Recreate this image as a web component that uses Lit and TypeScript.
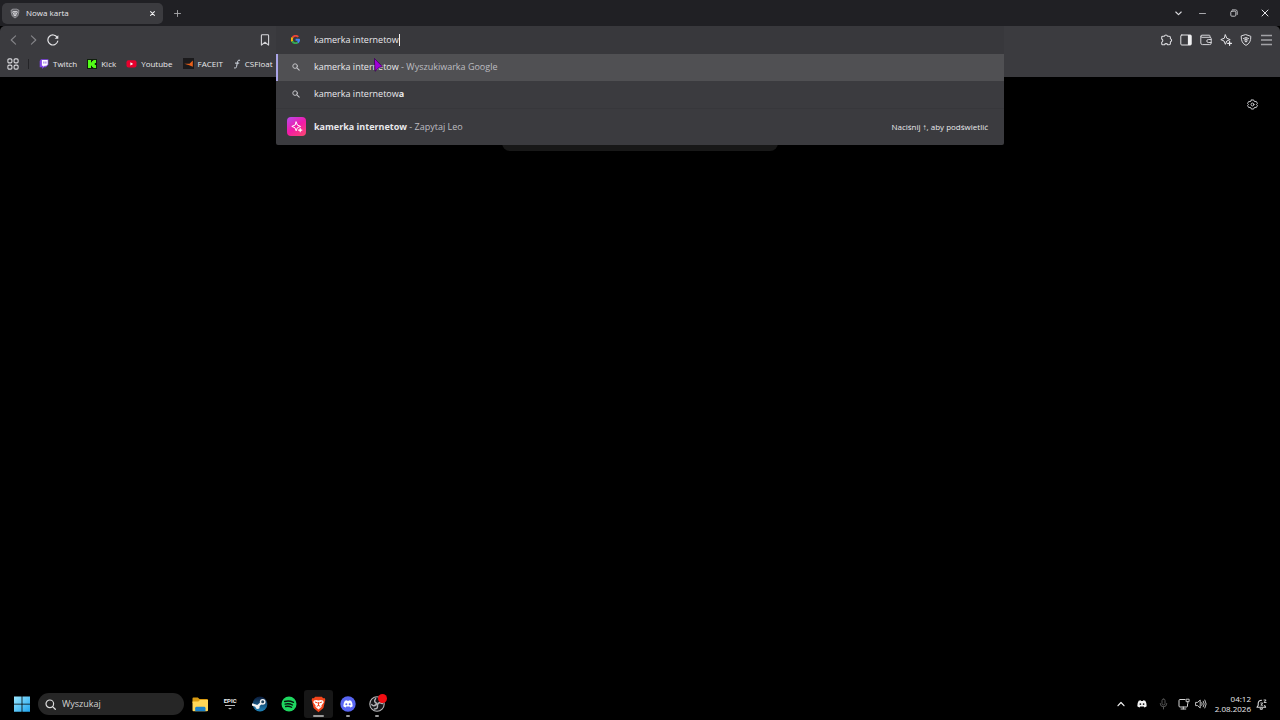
import { LitElement, html, css, svg } from "lit";
import { customElement } from "lit/decorators.js";

const icon = (w: number, h: number, body: unknown, vb = `0 0 ${w} ${h}`) =>
  html`<svg width=${w} height=${h} viewBox=${vb} fill="none" stroke-linecap="round" stroke-linejoin="round" aria-hidden="true">${body}</svg>`;

const shieldPath = "M6 .7 10.8 2.3C11 6.8 9.4 9.8 6 11.4 2.6 9.8 1 6.8 1.2 2.3Z";

const icons = {
  tabShield: icon(10, 11, svg`<path d="M3.4.8h5.2l1 1 1.2.2-.4 1.2.3.8-1.4 5L6 11.4 2.7 9l-1.4-5 .3-.8L1.2 2l1.2-.2Z" fill="#606065" stroke="#aaaab0" stroke-width=".9"/><path d="M3.3 3.2 5 3l1 .4L7 3l1.7.2.7 1.2-1.6 2.4L8 8 6 9.6 4 8l.2-1.2-1.6-2.4Z" fill="#d5d5d9"/><path d="M4 4.7l1.2.4M8 4.7l-1.2.4M6 5.3v2" stroke="#55555a" stroke-width=".7"/>`, "0 0 12 12"),
  close: icon(5, 5, svg`<path d="M.6.6 4.4 4.4M4.4.6.6 4.4" stroke="#f0f0f2" stroke-width="1.1"/>`),
  plus: icon(7, 7, svg`<path d="M3.5.5v6M.5 3.5h6" stroke="#a9a9ad" stroke-width=".9"/>`),
  chevron: icon(7, 5, svg`<path d="M.8 1 3.5 3.7 6.2 1" stroke="#dcdce0" stroke-width="1.1"/>`),
  minimize: icon(7, 5, svg`<path d="M.5 2.5h6" stroke="#b8b8bc" stroke-width=".9"/>`),
  restore: icon(8, 8, svg`<rect x=".8" y="2.2" width="5" height="5" rx="1" stroke="#d0d0d4" stroke-width=".9"/><path d="M2.4.9h3.2a1.6 1.6 0 0 1 1.6 1.6v3" stroke="#d0d0d4" stroke-width=".9"/>`),
  exit: icon(8, 8, svg`<path d="M1 1l6 6M7 1 1 7" stroke="#e4e4e8" stroke-width="1"/>`),
  back: icon(7, 10, svg`<path d="M5.6.8 1.2 5l4.4 4.2" stroke="#858589" stroke-width="1.1"/>`),
  forward: icon(7, 10, svg`<path d="M1.4.8 5.8 5 1.4 9.2" stroke="#858589" stroke-width="1.1"/>`),
  reload: icon(12, 12, svg`<path d="M10.2 3.4A5 5 0 1 0 10.8 7" stroke="#e3e3e6" stroke-width="1.2"/><path d="M11.3 1.2v3.6H7.7Z" fill="#e3e3e6"/>`),
  bookmark: icon(10, 12, svg`<path d="M1.4 1.6q0-.9.9-.9h5.4q.9 0 .9.9v9.5L5 8.3l-3.6 2.8Z" stroke="#d6d6da" stroke-width="1.1"/>`),
  grid: icon(12, 12, svg`<g stroke="#d8d8dc" stroke-width="1.1"><rect x=".9" y=".9" width="4" height="4" rx="1.2"/><rect x="7.1" y=".9" width="4" height="4" rx="1.2"/><rect x=".9" y="7.1" width="4" height="4" rx="1.2"/><rect x="7.1" y="7.1" width="4" height="4" rx="1.2"/></g>`),
  twitch: icon(10, 10, svg`<path d="M2 .3h7.4v5.5L6.8 8.3H5L3.2 10V8.3H.7V2Z" fill="#8046e6"/><path d="M2.9 1h5.8v4.4L7.3 6.7H5.6L4.3 8V6.7H2.9Z" fill="#fff"/><path d="M4.9 2.5v2.1M6.9 2.5v2.1" stroke="#8046e6" stroke-width=".9" stroke-linecap="butt"/>`),
  kick: icon(10, 10, svg`<path d="M0 0h10v10H0Z" fill="#10200c"/><path d="M1 1h3v2.2h1V2h1.2V1H9v3H7.8v2H9v3H6.2V8H5V6.8H4V9H1Z" fill="#53fc18"/>`),
  youtube: icon(11, 10, svg`<rect x=".5" y="1.2" width="10" height="7.4" rx="2" fill="#e8002d"/><path d="M4.4 3.3 7.2 4.9 4.4 6.5Z" fill="#fff"/>`),
  faceit: icon(11, 11, svg`<path d="M0 0h11v11H0Z" fill="#1b1a1c"/><path d="M9.8 2.5v6.2Q7 7.2 1.2 5.8h5.3Z" fill="#e9601a"/>`),
  csfloat: icon(8, 10, svg`<path d="M6.7 1.2C5.2.7 4.8 1.6 4.4 3.5L3.6 7.4C3.2 9 2.5 9.4 1.5 9M2.4 4.1h3.4" stroke="#d5dce6" stroke-width="1"/>`),
  google: icon(9, 9, svg`<g stroke-width="1.9" stroke-linecap="butt"><path d="M7.3 1.9A3.7 3.7 0 0 0 1.4 2.8" stroke="#ea4335"/><path d="M1.4 2.6a3.7 3.7 0 0 0 0 3.8" stroke="#fbbc05"/><path d="M1.3 6.3a3.7 3.7 0 0 0 5.7 1" stroke="#34a853"/><path d="M6.8 7.4A3.5 3.5 0 0 0 8.1 4.8H4.6" stroke="#4285f4"/></g>`),
  search: icon(8, 8, svg`<circle cx="3.1" cy="3.1" r="2.3" stroke="#c4c4c8" stroke-width="1"/><path d="M4.9 4.9 7.2 7.2" stroke="#c4c4c8" stroke-width="1.1"/>`),
  leo: icon(12, 12, svg`<path d="M5.2 1 6.4 4.1 9.6 5.4 6.4 6.7 5.2 9.8 3.9 6.7.8 5.4 3.9 4.1Z" stroke="#fff" stroke-width="1"/><path d="M9.2 7.4v3.4M7.5 9.1h3.4" stroke="#fff" stroke-width="1.1"/>`),
  puzzle: icon(13, 12, svg`<path d="M2.9 2.2h1.500a1.600 1.600 0 0 1 3.100 0h1.700q1.200 0 1.200 1.200v1.400a1.600 1.600 0 0 1 0 3.100v1.700q0 1.200-1.200 1.200H7.700a1.700 1.700 0 0 0-3.200 0H2.900q-1.200 0-1.200-1.200V8.200a1.700 1.700 0 0 0 0-3.200V3.400q0-1.200 1.200-1.200Z" stroke="#dadade" stroke-width="1.100"/>`),
  sidebar: icon(12, 12, svg`<rect x=".8" y="1" width="10.4" height="10" rx="1" stroke="#e3e3e6" stroke-width="1"/><path d="M7.9 1h2.7q.7 0 .7.7v8.6q0 .7-.7.7H7.9Z" fill="#f0f0f2"/>`),
  wallet: icon(12, 12, svg`<path d="M10 3.2V2q0-.8-.8-.8H2Q.8 1.2.8 2.3V9q0 1.6 1.6 1.6h7.3q1.5 0 1.5-1.500V4.700q0-1.400-1.400-1.400H2Q.8 3.300.8 2.300M11.100 5.500H8.300a1.500 1.500 0 0 0 0 3h2.800" stroke="#d5d5d9" stroke-width="1"/>`),
  sparkle: icon(12, 12, svg`<path d="M5.4.9 6.8 4.3 10.2 5.6 6.8 7 5.4 10.3 4 7 .8 5.6 4 4.3Z" stroke="#e0e0e4" stroke-width="1"/><path d="M9.6 7.5v3.8M7.7 9.4h3.8" stroke="#e8e8ec" stroke-width="1.2"/>`),
  shield: icon(12, 12, svg`<path d=${shieldPath} stroke="#d8d8dc" stroke-width="1"/><path d="M3.4 4.4Q6 2.5 8.6 4.4M4.2 6Q6 4.7 7.8 6M5.2 7.6h1.6M6 4v3.8" stroke="#d8d8dc" stroke-width="1"/>`),
  menu: icon(11, 12, svg`<path d="M0 1.500h11M0 6h11M0 10.500h11" stroke="#a2a2a6" stroke-width="1.400" stroke-linecap="butt"/>`),
  gear: icon(11, 11, svg`<path d="M4.300.8h2.400l.5 1.300.8.500 1.400-.3 1.200 2.100-.9 1.100.9 1.100-1.200 2.100L8 8.400l-.8.500-.5 1.300H4.300l-.5-1.300L3 8.400l-1.400.3L.4 6.600l.9-1.100-.9-1.100 1.200-2.100 1.400.3.800-.5Z" stroke="#cdcdd1" stroke-width="1"/><circle cx="5.500" cy="5.500" r="1.500" stroke="#cdcdd1" stroke-width="1"/>`, "-.2 0 11.400 11"),
  start: icon(16, 16, svg`<defs><linearGradient id="w" x1="0" y1="0" x2="1" y2="1"><stop stop-color="#9be7ff"/><stop offset="1" stop-color="#1fa5ee"/></linearGradient></defs><path d="M0 .5h7.6v7.2H0ZM8.4.5H16v7.2H8.4ZM0 8.5h7.6v7.2H0ZM8.4 8.5H16v7.2H8.4Z" fill="url(#w)"/>`),
  lens: icon(11, 11, svg`<circle cx="4.8" cy="4.8" r="3.8" stroke="#dedede" stroke-width="1.2"/><path d="M7.6 7.6 10.3 10.3" stroke="#dedede" stroke-width="1.3"/>`),
  folder: icon(17, 15, svg`<path d="M.5 1.5q0-1 1-1h4.3L7.5 2H15q1 0 1 1v3H.5Z" fill="#d99b12"/><path d="M.5 4.4h5.8L8 3h8v10.2q0 1-1 1H1.500q-1 0-1-1Z" fill="#ffd757"/><path d="M3.200 14.200v-3q0-1.400 1.400-1.400h7.500q1.400 0 1.400 1.400v3Z" fill="#1b82c9"/>`),
  steam: icon(16, 16, svg`<defs><linearGradient id="s" x1="0" y1="0" x2="0" y2="1"><stop stop-color="#0b1b3a"/><stop offset="1" stop-color="#1f83b8"/></linearGradient></defs><circle cx="8" cy="8" r="7.4" fill="url(#s)"/><path d="M.7 8.6 5.4 10.4 10.5 6" stroke="#f2f2f2" stroke-width="2.3"/><circle cx="10.7" cy="5.8" r="2.9" fill="#f2f2f2"/><circle cx="10.7" cy="5.8" r="1.5" fill="#23455f"/><circle cx="5.6" cy="11" r="2.1" fill="#f2f2f2"/>`),
  spotify: icon(16, 16, svg`<circle cx="8" cy="8" r="7.5" fill="#1ed760"/><path d="M3.6 5.5q4.7-1.3 8.9.9M4.1 8.1q4-1 7.4.9M4.6 10.5q3.3-.8 6 .8" stroke="#07160c" stroke-width="1.3"/>`),
  brave: icon(15, 17, svg`<path d="M4.2.7h6.6l1.4 1.5 1.4-.2.8 2-.4 1-1.6 7L7.5 16.2 2.6 12 1 5 .6 4l.8-2 1.4.2Z" fill="#f4461c"/><path d="M3 4.4 5.2 4l2.3.6L9.8 4l2.2.4.8 1.8-2.4 3.2.2 1.4-3.1 2.8-3.1-2.8.2-1.4-2.4-3.2Z" fill="#fff"/><path d="M4.3 6.1 6.4 6.9M10.7 6.1 8.6 6.9M7.5 6.5v3M6.1 10.2l1.4-.8 1.4.8" stroke="#f4461c" stroke-width="1"/>`),
  discord: icon(16, 16, svg`<circle cx="8" cy="8" r="7.7" fill="#5865f2"/><path d="M4.9 4.8Q6 4.2 6.7 4.2L7 4.8h2l.3-.6q.8 0 1.9.6 1.7 2.6 1.5 5.5-1.2 1-2.4 1.2l-.6-.9H6.3l-.6.9Q4.5 11.3 3.3 10.3 3.2 7.2 4.9 4.8Z" fill="#fff"/><circle cx="6.3" cy="8.3" r="1" fill="#5865f2"/><circle cx="9.7" cy="8.3" r="1" fill="#5865f2"/>`),
  obs: icon(16, 16, svg`<circle cx="8" cy="8" r="7.2" fill="#17171a" stroke="#b9b9bb" stroke-width="1.1"/><g stroke="#b0b0b3" stroke-width="1.5"><path d="M6.6 2.6Q4.2 5.6 7.8 7.5"/><path d="M13.3 7.5Q9.6 5.3 8.5 8.8"/><path d="M5.5 13Q9.7 12.8 8.2 8.6"/><path d="M2.8 8.6Q4.5 11 7.4 8.4"/></g>`),
  up: icon(8, 6, svg`<path d="M1 4.7 4 1.5 7 4.7" stroke="#f0f0f0" stroke-width="1.2"/>`),
  discordTray: icon(10, 8, svg`<path d="M1.7.8Q3 .2 3.7.3L4 1h2l.3-.7Q7 .2 8.3.8 10 3.4 9.7 6.3 8.6 7.3 7.4 7.4L6.8 6.5H3.2L2.6 7.4Q1.4 7.3.3 6.3 0 3.4 1.7.8Z" fill="#f4f4f4"/><circle cx="3.4" cy="4.1" r=".9" fill="#111"/><circle cx="6.6" cy="4.1" r=".9" fill="#111"/>`),
  mic: icon(9, 12, svg`<rect x="3" y="1" width="3" height="6" rx="1.5" stroke="#5e5e5e" stroke-width=".9"/><path d="M1.2 5.5q0 3.3 3.3 3.3t3.3-3.3M4.5 8.8V11" stroke="#5e5e5e" stroke-width=".9"/>`),
  network: icon(12, 12, svg`<path d="M7 1.500H2q-1 0-1 1v5.500q0 1 1 1h6.500q1 0 1-1V6.300M3 11h4.800M5.300 9v1.900" stroke="#d6d6d6" stroke-width="1"/><path d="M8.500 1.200h2.600v2.500H8.500ZM9.800 3.700v2" stroke="#d6d6d6" stroke-width=".9"/>`),
  speaker: icon(12, 12, svg`<path d="M1 4.400h1.600L5.200 2v8L2.600 7.600H1Z" stroke="#d6d6d6" stroke-width=".9"/><path d="M6.800 4.600q1 1.400 0 2.800M8.300 3.200q2 2.800 0 5.600M9.900 2q2.700 4 0 8" stroke="#d6d6d6" stroke-width=".9"/>`),
  bell: icon(11, 11, svg`<path d="M5.600 1.200Q2.300 1.200 2.200 4.500V6.300L1 8.300h8.600L8.700 6.500M4.200 9.700q1.100.9 2.200 0" stroke="#dadada" stroke-width="1.100"/><path d="M4.800 4h1.900L4.800 6.200h1.900M8 1h2.100L8 3.500h2.100" stroke="#dadada" stroke-width=".9"/>`),
  pointer: icon(9, 14, svg`<path d="M.6.6 8.400 8.600 5 9.400 1.300 13Z" fill="#a000d8" stroke="#3c0058" stroke-width=".8"/>`),
};

@customElement("app-root")
export class AppRoot extends LitElement {
  static styles = css`
    :host {
      display: flex;
      flex-direction: column;
      height: 100vh;
      min-height: 320px;
      background: #000;
      color: #e9e9ec;
      font: 9px/12px "Open Sans", "Noto Sans", sans-serif;
      overflow: hidden;
    }
    * { box-sizing: border-box; }
    svg { display: block; flex: none; }
    button, input { font: inherit; color: inherit; background: none; border: 0; padding: 0; margin: 0; outline: 0; }
    button { display: flex; align-items: center; justify-content: center; }
    a { color: inherit; text-decoration: none; }

    .tabs { display: flex; align-items: center; height: 26px; padding-left: 2px; background: #202024; }
    .tab { display: flex; align-items: center; width: 161px; height: 21px; padding: 0 8px; gap: 6px; border-radius: 5px; background: #3b3b3f; }
    .tab-title { flex: 1; font-size: 8px; }
    .new-tab { width: 28px; height: 20px; }
    .window { display: flex; margin-left: auto; }
    .window button { width: 31px; height: 26px; }
    .window .list { width: 18px; }

    .chrome { background: #3b3b3f; border-radius: 5px 5px 0 0; }
    .nav { display: grid; grid-template-columns: 1fr minmax(0, 728px) 1fr; height: 28px; }
    .nav-side { display: flex; align-items: center; padding: 0 3px; }
    .nav-side button { width: 20px; height: 20px; }
    .nav-side.right { justify-content: flex-end; padding-right: 4px; }
    .save { margin-left: auto; }
    .nav-side.left { padding-right: 1px; }

    .omnibox { position: relative; background: #38383c; z-index: 2; }
    .query { display: flex; align-items: center; height: 28px; padding: 0 15px 1px; font-size: 9px; }
    .lead { display: flex; width: 23px; flex: none; }
    .query input { field-sizing: content; padding: 0; height: 12px; }
    .caret { width: 1px; height: 12px; background: #eee; }
    .results { position: absolute; left: 0; right: 0; top: 100%; margin: 0; padding: 0; list-style: none; background: #3b3b3f; border-radius: 0 0 2px 2px; }
    .result { display: flex; align-items: center; height: 27px; padding: 0 16px 1px; }
    .result .lead { width: 22px; }
    .result.active { background: #505053; border-left: 2px solid #aaa5e8; padding-left: 14px; }
    .result.ask { height: 37px; padding-left: 11px; border-top: 1px solid #37373b; }
    .result.ask .lead { width: 27px; }
    .leo { display: flex; align-items: center; justify-content: center; width: 19px; height: 19px; border-radius: 4px; background: linear-gradient(145deg, #b74bee, #f21aa8 50%, #fb4a6d); }
    .muted { color: #bdbdc1; white-space: pre; }
    .hint { margin-left: auto; font-size: 8px; }

    .bookmarks { display: flex; align-items: center; height: 23px; padding: 0 7px 4px; font-size: 8px; font-weight: 500; }
    .bookmarks a { display: flex; align-items: center; gap: 4px; margin-right: 10px; }
    .rule { width: 1px; height: 10px; margin: 0 10px 0 9px; background: #242427; }

    .page { position: relative; flex: 1; display: grid; grid-template-columns: 1fr 276px 1fr; align-items: start; }
    .search-card { grid-column: 2; height: 40px; margin-top: 34px; border-radius: 8px; background: #181818; }
    .settings { justify-self: end; width: 20px; height: 20px; margin: 17px 18px 0 0; }

    .taskbar { display: flex; align-items: center; height: 32px; padding: 0 13px 0 14px; }
    .start { width: 16px; }
    .find { display: flex; align-items: center; gap: 6px; width: 146px; height: 22px; margin: 0 2px 0 8px; padding-left: 7px; border-radius: 11px; background: #262626; }
    .find input { width: 100px; }
    .find input::placeholder { color: #d2d2d2; opacity: 1; }
    .apps { display: flex; width: 206px; }
    .app { position: relative; flex: 1; height: 28px; }
    .app.open::after { content: ""; position: absolute; bottom: 1px; width: 4px; height: 2px; border-radius: 1px; background: #9a9a9a; }
    .app.current { background: #171717; border-radius: 3px; }
    .app.current::after { width: 11px; }
    .epic { display: flex; flex-direction: column; align-items: center; font: 700 6px/6px "Roboto", "Liberation Sans", sans-serif; color: #eee; }
    .badge { position: absolute; right: 5px; top: 4px; width: 9px; height: 9px; border-radius: 50%; background: #f30d12; }
    .tray { display: flex; align-items: center; margin-left: auto; }
    .tray button { width: 21px; height: 24px; }
    .tray .tight { width: 12px; }
    .clock { margin: 0 5px 0 8px; text-align: right; font-size: 8px; line-height: 10px; }
    .tray .bell { width: 11px; }

    .pointer { position: absolute; left: 98px; top: 32px; z-index: 3; pointer-events: none; }
  `;

  private bookmarks = [
    ["Twitch", icons.twitch],
    ["Kick", icons.kick],
    ["Youtube", icons.youtube],
    ["FACEIT", icons.faceit],
    ["CSFloat", icons.csfloat],
  ] as const;

  render() {
    return html`
      <header class="tabs">
        <div class="tab">${icons.tabShield}<span class="tab-title">Nowa karta</span><button aria-label="Zamknij kartę">${icons.close}</button></div>
        <button class="new-tab" aria-label="Otwórz nową kartę">${icons.plus}</button>
        <div class="window">
          <button class="list" aria-label="Przeszukaj karty">${icons.chevron}</button>
          <button aria-label="Minimalizuj">${icons.minimize}</button>
          <button aria-label="Przywróć">${icons.restore}</button>
          <button aria-label="Zamknij">${icons.exit}</button>
        </div>
      </header>
      <div class="chrome">
        <div class="nav">
          <div class="nav-side left">
            <button aria-label="Wstecz">${icons.back}</button>
            <button aria-label="Dalej">${icons.forward}</button>
            <button aria-label="Odśwież">${icons.reload}</button>
            <button class="save" aria-label="Dodaj zakładkę">${icons.bookmark}</button>
          </div>
          <div class="omnibox">
            <div class="query"><span class="lead">${icons.google}</span><input aria-label="Pasek adresu" .value=${"kamerka internetow"} /><span class="caret"></span></div>
            <ul class="results">
              <li class="result active"><span class="lead">${icons.search}</span><span>kamerka internetow</span><span class="muted"> - Wyszukiwarka Google</span></li>
              <li class="result"><span class="lead">${icons.search}</span><span>kamerka internetow<b>a</b></span></li>
              <li class="result ask"><span class="lead"><span class="leo">${icons.leo}</span></span><b>kamerka internetow</b><span class="muted"> - Zapytaj Leo</span><span class="hint">Naciśnij ↑, aby podświetlić</span></li>
            </ul>
            <span class="pointer">${icons.pointer}</span>
          </div>
          <div class="nav-side right">
            <button aria-label="Rozszerzenia">${icons.puzzle}</button>
            <button aria-label="Panel boczny">${icons.sidebar}</button>
            <button aria-label="Portfel">${icons.wallet}</button>
            <button aria-label="Leo">${icons.sparkle}</button>
            <button aria-label="VPN">${icons.shield}</button>
            <button aria-label="Menu">${icons.menu}</button>
          </div>
        </div>
        <nav class="bookmarks">
          <button aria-label="Wszystkie zakładki">${icons.grid}</button><span class="rule"></span>
          ${this.bookmarks.map(([name, glyph]) => html`<a href="#">${glyph}<span>${name}</span></a>`)}
        </nav>
      </div>
      <main class="page">
        <div class="search-card"></div>
        <button class="settings" aria-label="Dostosuj">${icons.gear}</button>
      </main>
      <footer class="taskbar">
        <button class="start" aria-label="Start">${icons.start}</button>
        <label class="find">${icons.lens}<input aria-label="Wyszukaj" placeholder="Wyszukaj" /></label>
        <div class="apps">
          <button class="app" aria-label="Eksplorator plików">${icons.folder}</button>
          <button class="app" aria-label="Epic Games"><span class="epic">EPIC${icon(10, 6, svg`<path d="M0 1.5h10" stroke="#bbb" stroke-width="1"/><path d="M3 4h4L5 5.500Z" fill="#bbb"/>`)}</span></button>
          <button class="app" aria-label="Steam">${icons.steam}</button>
          <button class="app" aria-label="Spotify">${icons.spotify}</button>
          <button class="app open current" aria-label="Brave">${icons.brave}</button>
          <button class="app open" aria-label="Discord">${icons.discord}</button>
          <button class="app open" aria-label="OBS Studio">${icons.obs}<span class="badge"></span></button>
        </div>
        <div class="tray">
          <button aria-label="Ukryte ikony">${icons.up}</button>
          <button aria-label="Discord">${icons.discordTray}</button>
          <button aria-label="Mikrofon">${icons.mic}</button>
          <button aria-label="Sieć">${icons.network}</button>
          <button class="tight" aria-label="Głośność">${icons.speaker}</button>
          <time class="clock">04:12<br />2.08.2026</time>
          <button class="bell" aria-label="Powiadomienia">${icons.bell}</button>
        </div>
      </footer>
    `;
  }
}
